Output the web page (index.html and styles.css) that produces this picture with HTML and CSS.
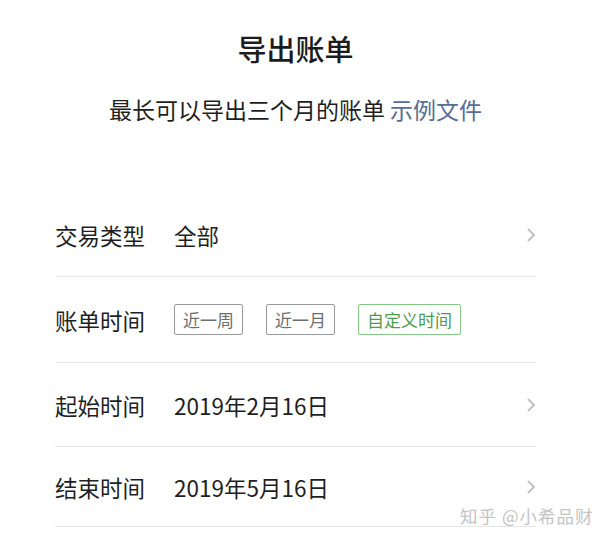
FILE: index.html
```html
<!DOCTYPE html>
<html lang="zh-CN">
<head>
<meta charset="utf-8">
<link rel="stylesheet" href="styles.css">
</head>
<body>
<div class="page">
  <header class="head">
    <h1 class="title">导出账单</h1>
    <p class="sub">最长可以导出三个月的账单 <a class="link">示例文件</a></p>
  </header>
  <section class="list">
    <div class="row">
      <span class="label">交易类型</span>
      <span class="value">全部</span>
      <svg class="chev" width="10" height="16" viewBox="0 0 10 16"><polyline points="2,2 8,8 2,14" fill="none" stroke="#c2c2c2" stroke-width="2"/></svg>
    </div>
    <div class="row">
      <span class="label">账单时间</span>
      <div class="chips">
        <span class="chip">近一周</span>
        <span class="chip">近一月</span>
        <span class="chip active">自定义时间</span>
      </div>
    </div>
    <div class="row">
      <span class="label">起始时间</span>
      <span class="value">2019年2月16日</span>
      <svg class="chev" width="10" height="16" viewBox="0 0 10 16"><polyline points="2,2 8,8 2,14" fill="none" stroke="#c2c2c2" stroke-width="2"/></svg>
    </div>
    <div class="row">
      <span class="label">结束时间</span>
      <span class="value">2019年5月16日</span>
      <svg class="chev" width="10" height="16" viewBox="0 0 10 16"><polyline points="2,2 8,8 2,14" fill="none" stroke="#c2c2c2" stroke-width="2"/></svg>
    </div>
  </section>
  <div class="mark">知乎 @小希品财</div>
</div>
</body>
</html>
```
FILE: styles.css
```css
html, body {
  margin: 0;
  padding: 0;
  background: #ffffff;
}
body {
  font-family: "Noto Sans CJK SC", "Noto Sans", sans-serif;
  color: #1c1c1c;
  width: 609px;
  height: 542px;
  overflow: hidden;
}
.page {
  position: relative;
  width: 609px;
  height: 542px;
}
.head {
  display: flex;
  flex-direction: column;
  align-items: center;
  padding: 28px 18px 0 0;
}
.title {
  margin: 0;
  font-size: 29px;
  font-weight: 500;
  line-height: 40px;
  letter-spacing: 0;
}
.sub {
  margin: 26px 0 0 0;
  font-size: 23px;
  line-height: 31px;
  color: #1f1f1f;
}
.link {
  color: #586c94;
}
.list {
  margin: 68px 73px 0 55px;
  display: flex;
  flex-direction: column;
}
.row {
  display: flex;
  align-items: center;
  height: 83px;
  border-bottom: 1px solid #e8e8e8;
}
.row:nth-child(2) {
  height: 85px;
}
.row:nth-child(4) {
  height: 79px;
}
.label {
  width: 119px;
  font-size: 22.5px;
  color: #1f1f1f;
  flex: none;
}
.value {
  flex: 1;
  font-size: 22.5px;
  color: #1f1f1f;
}
.chev {
  flex: none;
  margin-right: 0;
}
.chips {
  display: flex;
  gap: 23px;
}
.chip {
  box-sizing: border-box;
  height: 31px;
  padding: 0 8px;
  border: 1px solid #9a9a9a;
  border-radius: 2px;
  font-size: 17px;
  line-height: 29px;
  color: #6e6e6e;
}
.chip.active {
  border-color: #86c686;
  color: #4f9b4f;
}
.mark {
  position: absolute;
  left: 460px;
  top: 503px;
  font-size: 17.5px;
  color: #c4c4c4;
  letter-spacing: 1px;
}
```
